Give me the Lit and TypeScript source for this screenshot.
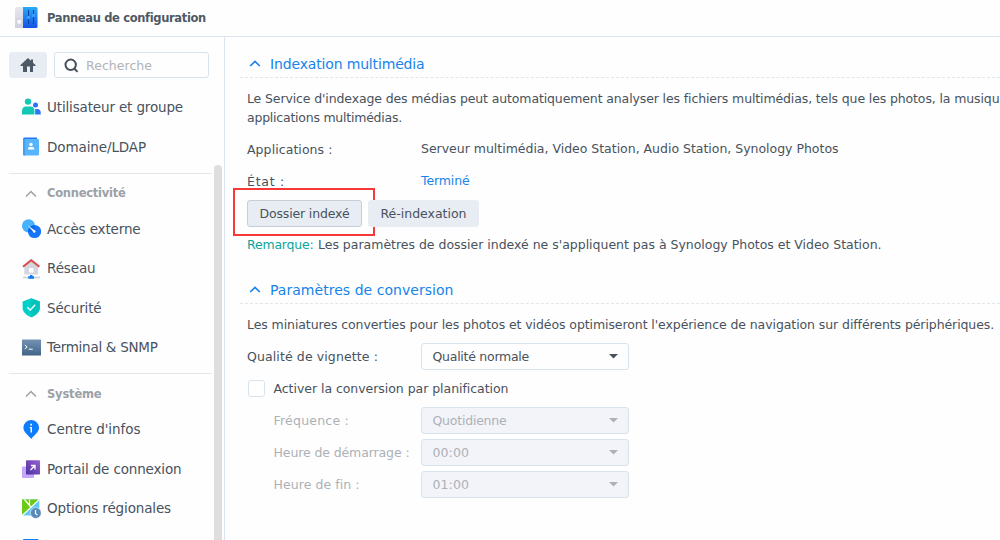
import { LitElement, html, css, svg } from "lit";
import { customElement } from "lit/decorators.js";

const icons: Record<string, unknown> = {
  users: svg`<circle cx="7" cy="3.600" r="3.200" fill="#12c8b4"/><path d="M1 16.500v-3.100Q1 8.500 5 8.500h4.500q4 0 4 4.900v3.100z" fill="#12c8b4"/><circle cx="14.500" cy="6.900" r="2.500" fill="#2b74f7"/><path d="M14.200 16.500V11h1.800q3.700 0 3.700 3.500v2z" fill="#2b74f7"/>`,
  book: svg`<path d="M2 2q0-1.500 1.500-1.500H16V4H2z" fill="#2379f2"/><rect x="2" y="2" width="16" height="16.500" rx="1.200" fill="#56b5fc"/><path d="M2 3.500V17.500q0 1 1 1h1V2H3z" fill="#3fa1f3"/><circle cx="10" cy="7.500" r="1.700" fill="#fff"/><path d="M7 12.500v-1Q7 10 8.700 10h2.800q1.700 0 1.700 1.500v1z" fill="#fff"/>`,
  external: svg`<circle cx="7.500" cy="6.800" r="6.600" fill="#45b3fc"/><circle cx="13.500" cy="12.500" r="6.600" fill="#1675fa"/><path d="M7 13a6.600 6.600 0 0 1 7.200-6.500A6.600 6.600 0 0 1 7 13z" fill="#0869e8"/><path d="M6.500 6.300 12.500 13l1.400-1.400z" fill="#fff"/><circle cx="13.300" cy="12.500" r="1.200" fill="#fff"/>`,
  network: svg`<path d="M3.300 7.500 10.200 2 17 7.500v8.100H3.300z" fill="#d3d6dc"/><path d="M2 7.700 10.200 1.200l8.200 6.500" fill="none" stroke="#d94c4c" stroke-width="2"/><rect x="8" y="9" width="4.500" height="4.500" fill="#fff"/><path d="M2 18.500h17" stroke="#cdd1d6" stroke-width="1.600"/><path d="M9 16h2.500v1.300H13v2.400H7.300v-2.400H9z" fill="#0c7cf5"/>`,
  shield: svg`<path d="M10.200.3 18.800 3.500V10c0 4-3.500 7-8.600 9.300C5.100 17 1.600 14 1.600 10V3.500z" fill="#03cec7"/><path d="M10.200.3 18.800 3.500V10c0 4-3.500 7-8.600 9.300z" fill="#02c2bc"/><path d="m6.200 9.300 3 2.700 5-5.300" stroke="#fff" stroke-width="1.300" fill="none"/>`,
  terminal: svg`<defs><linearGradient id="t" x2="0" y2="1"><stop stop-color="#7592b2"/><stop offset="1" stop-color="#426588"/></linearGradient></defs><rect x="1" y="1.500" width="19" height="16" rx=".6" fill="url(#t)"/><path d="m3.800 7 2.400 2-2.400 2M7.700 11.200h4" stroke="#fff" stroke-width="1" fill="none"/>`,
  info: svg`<path d="M10.200 19C8 15.700 2.400 12.400 2.400 7.800a7.800 7.800 0 0 1 15.600 0c0 4.600-5.600 7.900-7.800 11.200z" fill="#0d7efb"/><path d="M9.300 3.700H11v1.800H9.300zM8.700 7H11v5.500H9.500V8.100h-.8z" fill="#fff"/>`,
  portal: svg`<defs><linearGradient id="p" x1="1" x2="0" y2="1"><stop stop-color="#9960d2"/><stop offset="1" stop-color="#4b309f"/></linearGradient></defs><rect x="1" y="7.500" width="12" height="11.500" rx=".8" fill="#c6a5fb"/><rect x="5" y="1.300" width="14" height="14.200" rx=".8" fill="url(#p)"/><path d="M10 6.500h4v4M14 6.500l-4.500 4.500" fill="none" stroke="#fff" stroke-width="1.300"/>`,
  region: svg`<rect x="1" y=".5" width="17.300" height="16" fill="#62c8f8"/><path d="M1 .5h17.300L8.500 9.700 1 16.300z" fill="#6cca16"/><path d="m3.500.5 6.800 8M18.500.3 1 16.700M8.500 5.800V.5" fill="none" stroke="#fff" stroke-width="1.200"/><circle cx="14.800" cy="14" r="5.400" fill="#5a8bb8" stroke="#fff" stroke-width=".5"/><path d="M14.500 11v3.400l1.900 1.700" stroke="#fff" stroke-width="1.200" fill="none"/>`,
  update: svg`<rect x="2" y="0" width="15.500" height="18" rx="1" fill="#0d7efb"/>`,
};

type Label = [string, number];
type Item = [string, string, number];

const first: Item[] = [["users", "Utilisateur et groupe", 136], ["book", "Domaine/LDAP", 99]];
const groups: { title: Label; items: Item[] }[] = [
  { title: ["Connectivité", 78.5], items: [["external", "Accès externe", 93.5], ["network", "Réseau", 48.5], ["shield", "Sécurité", 54.5], ["terminal", "Terminal & SNMP", 110.5]] },
  { title: ["Système", 54.5], items: [["info", "Centre d'infos", 93.5], ["portal", "Portail de connexion", 134.5], ["region", "Options régionales", 124], ["update", "", 0]] },
];

const pen = document.createElement("canvas").getContext("2d")!;

/* Text tracked so that it occupies the given width. */
function fit(text: string, width: number, size = 12.5, weight = 400) {
  pen.font = `${weight} ${size}px "DejaVu Sans"`;
  const spacing = text ? (width - pen.measureText(text).width) / text.length : 0;
  return html`<span style="font-size:${size}px;letter-spacing:${spacing.toFixed(3)}px">${text}</span>`;
}

@customElement("app-root")
export class AppRoot extends LitElement {
  static styles = css`
    :host { display: flex; flex-direction: column; width: 1000px; height: 540px; overflow: hidden; background: #fefefe; color: #48525d; font: 12.5px/19px "DejaVu Sans", Verdana, sans-serif; white-space: nowrap; }
    * { box-sizing: border-box; }
    svg { display: block; flex: none; }
    .top { display: flex; align-items: center; flex: none; height: 37px; padding-left: 14px; gap: 9px; border-bottom: 1px solid #dce5ef; font-weight: 700; color: #4e5964; }
    .body { display: flex; flex: 1; min-height: 0; }
    .side { position: relative; flex: none; width: 225px; border-right: 1px solid #dce5ef; padding: 15px 12px 0 9px; overflow: hidden; }
    .tools { display: flex; gap: 7px; height: 26px; margin-bottom: 10px; }
    .home { display: flex; align-items: center; justify-content: center; width: 38px; height: 26px; background: #e8edf3; border-radius: 3px; }
    .search { display: flex; align-items: center; gap: 7px; width: 155px; height: 26px; padding-left: 9px; border: 1px solid #d9e3ec; border-radius: 3px; color: #b0b4b8; }
    .item { display: flex; align-items: center; gap: 6px; height: 39.600px; padding-left: 12px; }
    .group { border-top: 1px solid #e5e8ea; margin-top: 5.700px; }
    .head { display: flex; align-items: center; gap: 10px; height: 35.500px; padding: 4px 0 0 16px; color: #9ba1a7; font-weight: 700; }
    .thumb { position: absolute; right: 2px; top: 128px; width: 8px; height: 430px; border-radius: 4px; background: #dedede; }
    main { flex: 1; min-width: 0; padding: 14px 0 0 15px; overflow: hidden; }
    .title { display: flex; align-items: center; gap: 9px; height: 27px; padding-left: 9px; border-bottom: 1px dashed #e3e6e9; color: #1684ec; }
    .text { padding-left: 7px; }
    .intro { margin-top: 11px; }
    .row { display: flex; align-items: center; height: 32px; padding-left: 7px; }
    .label { width: 174px; flex: none; }
    .link { color: #1684ec; padding-bottom: 2px; }
    .value { padding-bottom: 1px; }
    .apps { margin-top: 6px; }
    .buttons { display: flex; gap: 6px; padding-left: 7px; height: 27px; margin-top: 3px; }
    .button { position: relative; display: flex; align-items: center; justify-content: center; width: 115px; height: 27px; border: 1px solid #c5cdd7; border-radius: 3px; background: #e8edf3; }
    .plain { width: 111px; border-color: #e8edf3; }
    .mark { position: absolute; left: -15px; top: -13px; width: 142px; height: 48px; border: 2px solid #f63838; }
    .note { margin-top: 8px; display: flex; }
    .green { color: #09a59c; width: 71px; }
    .second { margin-top: 23px; }
    .form { margin-top: 6px; }
    .select { display: flex; align-items: center; justify-content: space-between; width: 208px; height: 27px; padding: 0 10px 0 10.500px; border: 1px solid #d9e3ec; border-radius: 3px; }
    .off { color: #acb1b7; }
    .off .select { background: #f2f4f9; }
    .off .label { padding-left: 26.500px; }
    .box { width: 17px; height: 17px; margin: 0 8.500px 0 1px; border: 1px solid #d9e3ec; border-radius: 3px; background: #fff; }
  `;

  item([icon, label, width]: Item) {
    return html`<div class="item"><svg width="20" height="20" viewBox="0 0 20 20">${icons[icon]}</svg>${fit(label, width, 13.5)}</div>`;
  }

  title(text: string, width: number) {
    return html`<svg width="12" height="12" viewBox="0 0 12 12"><path d="m1.200 8 4.800-4.500L10.800 8" fill="none" stroke="currentColor" stroke-width="1.700"/></svg>${fit(text, width, 14)}`;
  }

  select(label: Label, value: Label, off = false) {
    return html`<div class="row ${off ? "off" : ""}"><span class="label">${fit(...label)}</span><div class="select">${fit(...value)}<svg width="9" height="5" viewBox="0 0 9 5"><path d="M0 0h9L4.500 4.500z" fill="currentColor"/></svg></div></div>`;
  }

  render() {
    return html`
      <header class="top">
        <svg width="24" height="24" viewBox="0 0 24 24">
          <defs><linearGradient id="b" x2="0" y2="1"><stop stop-color="#28aaf9"/><stop offset="1" stop-color="#1553e4"/></linearGradient><linearGradient id="g" x2="0" y2="1"><stop stop-color="#e6e7f0"/><stop offset="1" stop-color="#cfd0df"/></linearGradient></defs>
          <path d="M2.500 1H10v21H1V2.500Q1 1 2.500 1z" fill="url(#g)"/><path d="M9 1h13q1.500 0 1.500 1.500v18q0 1.500-1.500 1.500H9z" fill="url(#b)"/>
          <circle cx="5.200" cy="15.700" r="2.700" fill="#f9f9fd" stroke="#b8bacb" stroke-width=".6"/><path d="M14.500 4v14M19.500 4v14" stroke="#0a4296" stroke-width="1"/><circle cx="14.500" cy="11.500" r="1.700" fill="#3c9cff"/><circle cx="19.500" cy="9.500" r="1.700" fill="#3c9cff"/>
        </svg>${fit("Panneau de configuration", 158.5, 11.5, 700)}
      </header>
      <div class="body">
        <nav class="side">
          <div class="tools">
            <div class="home"><svg width="16" height="14" viewBox="0 0 16 14"><path d="M8 0 .5 7v1H3v6h4V8.500h3V14h3V8h2.500V7L13 4.700V1.500h-2v1.300z" fill="#4d5966"/></svg></div>
            <div class="search"><svg width="15" height="15" viewBox="0 0 15 15"><circle cx="6.700" cy="6.800" r="5.200" fill="none" stroke="#48525d" stroke-width="2"/><path d="m10.300 10.500 3.200 3.400" stroke="#48525d" stroke-width="2"/></svg>${fit("Recherche", 66)}</div>
          </div>
          ${first.map((i) => this.item(i))}
          ${groups.map((g) => html`<section class="group"><div class="head"><svg width="12" height="12" viewBox="0 0 12 12"><path d="m1 8.500 5-5 5 5" fill="none" stroke="currentColor" stroke-width="1.500"/></svg>${fit(g.title[0], g.title[1], 11.5, 700)}</div>${g.items.map((i) => this.item(i))}</section>`)}
          <div class="thumb"></div>
        </nav>
        <main>
          <div class="title">${this.title("Indexation multimédia", 154.5)}</div>
          <div class="text intro">${fit("Le Service d'indexage des médias peut automatiquement analyser les fichiers multimédias, tels que les photos, la musique", 760)}<br>${fit("applications multimédias.", 155)}</div>
          <div class="row apps"><span class="label">${fit("Applications :", 85.5)}</span><span class="value">${fit("Serveur multimédia, Video Station, Audio Station, Synology Photos", 417.5)}</span></div>
          <div class="row"><span class="label">${fit("État :", 38)}</span><span class="link">${fit("Terminé", 48.5)}</span></div>
          <div class="buttons"><div class="button">${fit("Dossier indexé", 90)}<div class="mark"></div></div><div class="button plain">${fit("Ré-indexation", 86)}</div></div>
          <div class="text note"><span class="green">${fit("Remarque:", 66.5)}</span>${fit("Les paramètres de dossier indexé ne s'appliquent pas à Synology Photos et Video Station.", 563.5)}</div>
          <div class="title second">${this.title("Paramètres de conversion", 183.5)}</div>
          <div class="text intro">${fit("Les miniatures converties pour les photos et vidéos optimiseront l'expérience de navigation sur différents périphériques.", 747)}</div>
          <div class="form">
            ${this.select(["Qualité de vignette :", 131], ["Qualité normale", 96.5])}
            <div class="row"><span class="box"></span>${fit("Activer la conversion par planification", 235)}</div>
            ${this.select(["Fréquence :", 75.5], ["Quotidienne", 74], true)}
            ${this.select(["Heure de démarrage :", 136], ["00:00", 36.5], true)}
            ${this.select(["Heure de fin :", 86], ["01:00", 36.5], true)}
          </div>
        </main>
      </div>`;
  }
}
